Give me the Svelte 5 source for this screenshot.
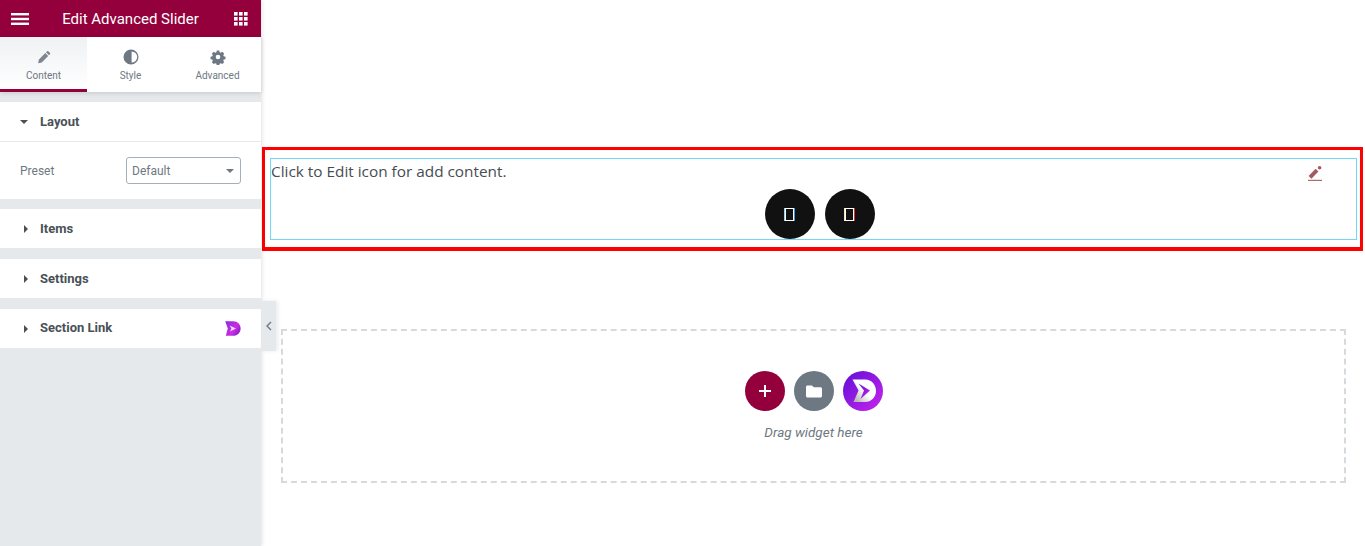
<script>
	const tabs = [
		{ label: 'Content', icon: 'pencil', active: true },
		{ label: 'Style', icon: 'half' },
		{ label: 'Advanced', icon: 'gear' }
	];
	const closedSections = ['Items', 'Settings'];
</script>

<svg class="defs" width="0" height="0" aria-hidden="true">
	<defs>
		<linearGradient id="dGrad" x1="0" y1="0" x2="1" y2="1">
			<stop offset="0" stop-color="#5f0fd6" />
			<stop offset="1" stop-color="#c926ec" />
		</linearGradient>
		<linearGradient id="dWhite" x1="0" y1="1" x2="0.7" y2="0.4">
			<stop offset="0.15" stop-color="#b5b5b5" />
			<stop offset="0.75" stop-color="#ffffff" />
		</linearGradient>
		<linearGradient id="dSmall" x1="0" y1="0" x2="1" y2="0.6">
			<stop offset="0" stop-color="#8a2be6" />
			<stop offset="0.7" stop-color="#c92de0" />
			<stop offset="1" stop-color="#8f1ed0" />
		</linearGradient>
	</defs>
</svg>

<div class="editor">
	<aside class="panel">
		<header class="topbar">
			<svg class="burger" viewBox="0 0 18 12" width="18" height="12">
				<rect y="0" width="18" height="2.4" />
				<rect y="4.8" width="18" height="2.4" />
				<rect y="9.6" width="18" height="2.4" />
			</svg>
			<h1>Edit Advanced Slider</h1>
			<svg class="grid" viewBox="0 0 14 14" width="14" height="14">
				{#each [0, 5, 10] as y}
					{#each [0, 5, 10] as x}
						<rect {x} {y} width="3.6" height="3.6" />
					{/each}
				{/each}
			</svg>
		</header>

		<nav class="tabs">
			{#each tabs as tab}
				<div class="tab" class:active={tab.active}>
					{#if tab.icon === 'pencil'}
						<svg viewBox="0 0 16 16" width="16" height="16">
							<path d="M11.6 1.4 a1 1 0 0 1 1.4 0 l1.9 1.9 a1 1 0 0 1 0 1.4 l-1.3 1.3 -3.3 -3.3z M9.5 3.5 l3.3 3.3 -7.4 7.4 -4.1 1 0.9 -4.3z" />
						</svg>
					{:else if tab.icon === 'half'}
						<svg viewBox="0 0 16 16" width="16" height="16">
							<path fill-rule="evenodd" d="M8 0.5 a7.5 7.5 0 1 0 0 15 a7.5 7.5 0 0 0 0 -15z M8.6 2.4 a5.6 5.6 0 0 1 0 11.2z" />
						</svg>
					{:else}
						<svg viewBox="0 0 16 16" width="16" height="16">
							<path fill-rule="evenodd" d="M6.6 0.6 h2.8 l0.4 2 1.3 0.6 1.8 -1 2 2 -1 1.8 0.5 1.2 2 0.5 v2.7 l-2 0.5 -0.5 1.2 1 1.8 -2 2 -1.8 -1 -1.3 0.6 -0.4 2 h-2.8 l-0.4 -2 -1.3 -0.6 -1.8 1 -2 -2 1 -1.8 -0.5 -1.2 -2 -0.5 v-2.7 l2 -0.5 0.5 -1.2 -1 -1.8 2 -2 1.8 1 1.3 -0.6z M8 5.4 a2.6 2.6 0 1 0 0 5.2 a2.6 2.6 0 0 0 0 -5.2z" transform="translate(0.9 0.9) scale(0.89)" />
						</svg>
					{/if}
					<span>{tab.label}</span>
				</div>
			{/each}
		</nav>

		<section class="section">
			<div class="section-head open-head">
				<span class="caret-down"></span>
				<span class="title">Layout</span>
			</div>
			<div class="control">
				<span class="control-label">Preset</span>
				<div class="select">
					<span>Default</span>
					<span class="caret-down small"></span>
				</div>
			</div>
		</section>

		{#each closedSections as name}
			<section class="section">
				<div class="section-head">
					<span class="caret-right"></span>
					<span class="title">{name}</span>
				</div>
			</section>
		{/each}

		<section class="section">
			<div class="section-head">
				<span class="caret-right"></span>
				<span class="title link-title">Section Link</span>
				<svg class="badge" viewBox="0 0 16 15" width="16" height="15">
					<path fill="url(#dSmall)" d="M0.2 0.2 H8 C12.8 0.2 15.6 3.4 15.6 7.5 C15.6 11.6 12.6 14.8 8 14.8 H0.8 L2.8 7.6z" />
					<path fill="#f0d8fa" d="M4.6 4.6 L11 7.5 L5 10.4 L6.4 7.5z" />
				</svg>
			</div>
		</section>

		<button class="collapse" aria-label="Collapse panel">
			<svg viewBox="0 0 6 10" width="6" height="10">
				<path d="M5 1 L1 5 L5 9" fill="none" stroke="#6d7882" stroke-width="1.4" />
			</svg>
		</button>
	</aside>

	<main class="canvas">
		<div class="marked">
			<div class="slider-widget">
				<p>Click to Edit icon for add content.</p>
				<svg class="edit" viewBox="0 0 14 15" width="14" height="15">
					<path d="M2 11.4 L9 4.2" fill="none" stroke="#a65a60" stroke-width="4" />
					<circle cx="11.6" cy="1.8" r="1.8" />
					<rect x="0" y="13.8" width="14" height="1.1" />
				</svg>
				<div class="arrows">
					<div class="arrow prev" aria-label="Previous"><span></span></div>
					<div class="arrow next" aria-label="Next"><span></span></div>
				</div>
			</div>
		</div>

		<div class="dropzone">
			<div class="actions">
				<div class="round add">
					<svg viewBox="0 0 12 12" width="12" height="12">
						<rect x="5" y="0" width="2" height="12" />
						<rect x="0" y="5" width="12" height="2" />
					</svg>
				</div>
				<div class="round folder">
					<svg viewBox="0 0 16 13" width="16" height="13">
						<path d="M1.5 0.5 H6 L7.8 2.2 H14.5 C15.3 2.2 16 2.9 16 3.7 V11 C16 11.8 15.3 12.5 14.5 12.5 H1.5 C0.7 12.5 0 11.8 0 11 V2 C0 1.2 0.7 0.5 1.5 0.5z" />
					</svg>
				</div>
				<svg class="logo" viewBox="0 0 40 40" width="40" height="40">
					<circle cx="20" cy="20" r="20" fill="url(#dGrad)" />
					<path fill="url(#dWhite)" d="M9.5 8.5 H22 C29 8.5 33 14 33 20 C33 26 28.5 31 22 31 H10.5 L15.5 19.5z" />
					<path fill="url(#dGrad)" d="M15.5 12.5 L27 19.5 L17.5 28 L21 19.5z" />
				</svg>
			</div>
			<p class="hint">Drag widget here</p>
		</div>
	</main>
</div>

<style>
	:global(body) {
		margin: 0;
		background: #fff;
	}

	.defs {
		position: absolute;
	}

	.editor {
		display: flex;
		height: 546px;
		overflow: hidden;
		font-family: Roboto, sans-serif;
	}

	.panel {
		position: relative;
		flex: 0 0 261px;
		background: #e6e9ec;
		box-shadow: 1px 0 4px rgba(0, 0, 0, 0.12);
		z-index: 2;
	}

	.topbar {
		display: flex;
		align-items: center;
		justify-content: space-between;
		height: 37px;
		padding: 0 13px 0 11px;
		box-sizing: border-box;
		background: #93003c;
		fill: #fff;
	}

	.topbar h1 {
		margin: 0 2px 0 0;
		font-size: 15px;
		font-weight: 400;
		color: #fff;
	}

	.tabs {
		display: grid;
		grid-template-columns: 87px 87px 87px;
		height: 55px;
		background: #fff;
		box-shadow: 0 1px 5px rgba(0, 0, 0, 0.15);
	}

	.tab {
		display: flex;
		flex-direction: column;
		align-items: center;
		padding-top: 12px;
		box-sizing: border-box;
		fill: #6d7882;
		color: #6d7882;
		font-size: 10px;
	}

	.tab svg {
		display: block;
	}

	.tab span {
		margin-top: 5px;
	}

	.tab.active {
		background: linear-gradient(180deg, #eff1f3, #fff);
		border-bottom: 3px solid #93003c;
		fill: #7d868e;
	}

	.tab.active svg {
		width: 14px;
		height: 14px;
		margin: 1px 0;
	}

	.section {
		margin-top: 10px;
		background: #fff;
	}

	.section-head {
		display: flex;
		align-items: center;
		height: 40px;
		padding: 0 20px 0 24px;
		box-sizing: border-box;
		border-bottom: 1px solid #e6e9ec;
		font-size: 13px;
		font-weight: 700;
		color: #495157;
	}

	.open-head {
		padding-left: 20px;
	}

	.title {
		margin-left: 12px;
	}

	.link-title {
		margin-bottom: 2px;
	}

	.badge {
		margin-left: auto;
	}

	.caret-down {
		width: 0;
		height: 0;
		border-left: 4px solid transparent;
		border-right: 4px solid transparent;
		border-top: 4px solid #495157;
	}

	.caret-down.small {
		border-top-color: #6d7882;
	}

	.caret-right {
		width: 0;
		height: 0;
		border-top: 4px solid transparent;
		border-bottom: 4px solid transparent;
		border-left: 4px solid #495157;
	}

	.control {
		display: flex;
		align-items: center;
		justify-content: space-between;
		height: 57px;
		padding: 0 20px;
		box-sizing: border-box;
		font-size: 12px;
		color: #6d7882;
	}

	.select {
		display: flex;
		align-items: center;
		justify-content: space-between;
		width: 115px;
		height: 27px;
		padding: 0 6px 0 5px;
		box-sizing: border-box;
		border: 1px solid #a4afb7;
		border-radius: 3px;
	}

	.collapse {
		position: absolute;
		top: 301px;
		left: 261px;
		width: 15px;
		height: 50px;
		padding: 0;
		border: 0;
		background: #e6e9ec;
		box-shadow: 2px 0 4px rgba(0, 0, 0, 0.08);
		display: flex;
		align-items: center;
		justify-content: center;
	}

	.canvas {
		flex: 1;
		padding: 147px 2px 0 1px;
		min-width: 0;
	}

	.marked {
		height: 104px;
		padding: 8px 3px 7px 5px;
		box-sizing: border-box;
		border: 3px solid #f00;
		border-bottom-width: 4px;
	}

	.slider-widget {
		position: relative;
		height: 100%;
		box-sizing: border-box;
		border: 1px solid #71d7f7;
		padding: 1px 0 0 0;
	}

	.slider-widget p {
		margin: 0;
		font-family: 'Open Sans', sans-serif;
		font-size: 15.35px;
		line-height: 22px;
		color: #474c52;
	}

	.edit {
		position: absolute;
		top: 7px;
		right: 34px;
		fill: #a65a60;
	}

	.arrows {
		display: flex;
		justify-content: center;
		gap: 10px;
		margin-top: 7px;
		padding-left: 12px;
	}

	.arrow {
		display: flex;
		align-items: center;
		justify-content: center;
		width: 50px;
		height: 50px;
		border-radius: 50%;
		background: #111;
	}

	.arrow span {
		width: 7px;
		height: 11px;
		border: 1.5px solid #fff;
	}

	.prev span {
		box-shadow: -1px 0 0 #8fd4f5, 1px 0 0 #2f9bd8;
	}

	.next span {
		box-shadow: -1px 0 0 #f5e6b0, 1px 0 0 #d8352f;
	}

	.dropzone {
		height: 154px;
		margin: 78px 17px 0 19px;
		padding-top: 40px;
		box-sizing: border-box;
		border: 2px dashed #d5dadf;
		text-align: center;
	}

	.actions {
		display: flex;
		justify-content: center;
		gap: 9px;
	}

	.round {
		display: flex;
		align-items: center;
		justify-content: center;
		width: 40px;
		height: 40px;
		border-radius: 50%;
		fill: #fff;
	}

	.add {
		background: #93003c;
	}

	.folder {
		background: #6d7882;
	}

	.hint {
		margin: 13px 0 0;
		font-size: 13.5px;
		font-style: italic;
		color: #6d7882;
	}
</style>
